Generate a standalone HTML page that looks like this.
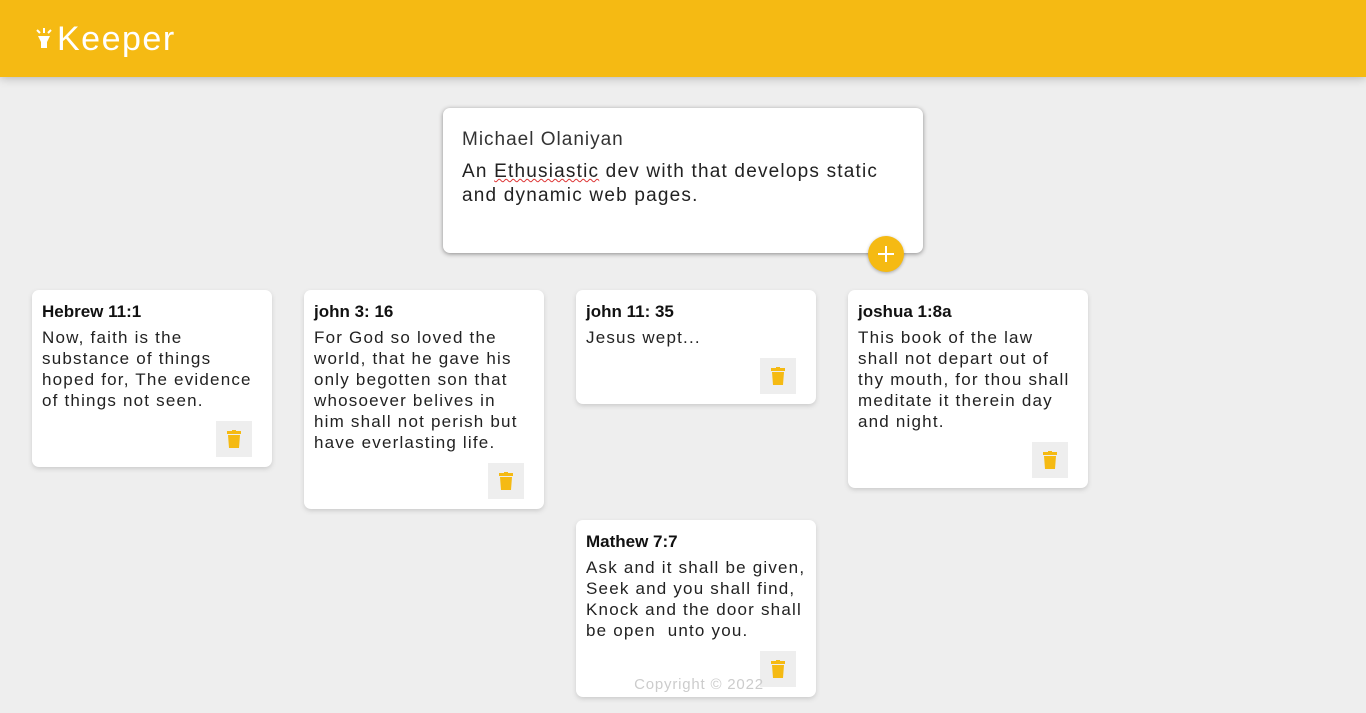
<!DOCTYPE html>
<html><head><meta charset="utf-8"><style>
*{margin:0;padding:0;box-sizing:border-box}
body{width:1366px;height:713px;overflow:hidden;background:#eeeeee;font-family:"Liberation Sans",sans-serif;position:relative;color:#222}
header{position:absolute;left:0;top:0;width:1366px;height:77px;background:#f5ba13;box-shadow:0 0 10px rgba(0,0,0,.3)}
header h1{position:absolute;left:57px;top:20px;color:#fff;font-size:34px;font-weight:normal;letter-spacing:1.5px}
.create{position:absolute;left:443px;top:108px;width:480px;height:145px;background:#fff;border-radius:7px;box-shadow:0 1px 5px rgb(138,137,137)}
.create .t{position:absolute;left:19px;top:21px;font-size:19px;color:#333;letter-spacing:1px}
.create .b{position:absolute;left:19px;top:52px;font-size:19px;line-height:24px;color:#222;letter-spacing:1.2px}
.plus{position:absolute;left:868px;top:236px;width:36px;height:36px;border-radius:50%;background:#f5ba13;box-shadow:0 1px 3px rgba(0,0,0,.3)}
.note{position:absolute;width:240px;background:#fff;border-radius:7px;box-shadow:0 2px 5px #ccc;padding:10px}
.note h2{font-size:17px;font-weight:bold;margin-top:2px;margin-bottom:5px;color:#111;letter-spacing:0}
.note p{font-size:17px;line-height:21px;color:#222;white-space:nowrap;letter-spacing:1.2px}
.del{position:absolute;right:20px;bottom:10px;width:36px;height:36px;background:#eee}
.del svg{position:absolute;left:11px;top:9px}
.copy{position:absolute;left:0;width:1398px;text-align:center;top:676px;color:#ccc;font-size:15px;letter-spacing:.8px}
</style></head><body>
<header>
<svg style="position:absolute;left:35px;top:28px" width="18" height="22" viewBox="0 0 18 22"><path d="M3 8h12l-3 6v6H6v-6z" fill="#fff"/><path d="M9 0v5M2 2l3 3M16 2l-3 3" stroke="#fff" stroke-width="2"/></svg>
<h1>Keeper</h1></header>
<div class="create"><div class="t">Michael Olaniyan</div><div class="b">An <span style="text-decoration:underline wavy #d33;text-decoration-thickness:1px">Ethusiastic</span> dev with that develops static<br>and dynamic web pages.</div></div>
<div class="plus"><svg width="36" height="36"><path d="M18 10v16M10 18h16" stroke="#fff" stroke-width="2"/></svg></div>

<div class="note" style="left:32px;top:290px;height:177px"><h2>Hebrew 11:1</h2><p>Now, faith is the<br>substance of things<br>hoped for, The evidence<br>of things not seen.</p><div class="del"><svg width="14" height="18"><rect x="0" y="1" width="14" height="3" fill="#f5ba13"/><rect x="5" y="0" width="4" height="2" fill="#f5ba13"/><path d="M1 5h12l-1 13H2z" fill="#f5ba13"/></svg></div></div>
<div class="note" style="left:304px;top:290px;height:219px"><h2>john 3: 16</h2><p>For God so loved the<br>world, that he gave his<br>only begotten son that<br>whosoever belives in<br>him shall not perish but<br>have everlasting life.</p><div class="del"><svg width="14" height="18"><rect x="0" y="1" width="14" height="3" fill="#f5ba13"/><rect x="5" y="0" width="4" height="2" fill="#f5ba13"/><path d="M1 5h12l-1 13H2z" fill="#f5ba13"/></svg></div></div>
<div class="note" style="left:576px;top:290px;height:114px"><h2>john 11: 35</h2><p>Jesus wept...</p><div class="del"><svg width="14" height="18"><rect x="0" y="1" width="14" height="3" fill="#f5ba13"/><rect x="5" y="0" width="4" height="2" fill="#f5ba13"/><path d="M1 5h12l-1 13H2z" fill="#f5ba13"/></svg></div></div>
<div class="note" style="left:848px;top:290px;height:198px"><h2>joshua 1:8a</h2><p>This book of the law<br>shall not depart out of<br>thy mouth, for thou shall<br>meditate it therein day<br>and night.</p><div class="del"><svg width="14" height="18"><rect x="0" y="1" width="14" height="3" fill="#f5ba13"/><rect x="5" y="0" width="4" height="2" fill="#f5ba13"/><path d="M1 5h12l-1 13H2z" fill="#f5ba13"/></svg></div></div>
<div class="note" style="left:576px;top:520px;height:177px"><h2>Mathew 7:7</h2><p>Ask and it shall be given,<br>Seek and you shall find,<br>Knock and the door shall<br>be open &nbsp;unto you.</p><div class="del"><svg width="14" height="18"><rect x="0" y="1" width="14" height="3" fill="#f5ba13"/><rect x="5" y="0" width="4" height="2" fill="#f5ba13"/><path d="M1 5h12l-1 13H2z" fill="#f5ba13"/></svg></div></div>
<div class="copy">Copyright © 2022</div>
</body></html>
